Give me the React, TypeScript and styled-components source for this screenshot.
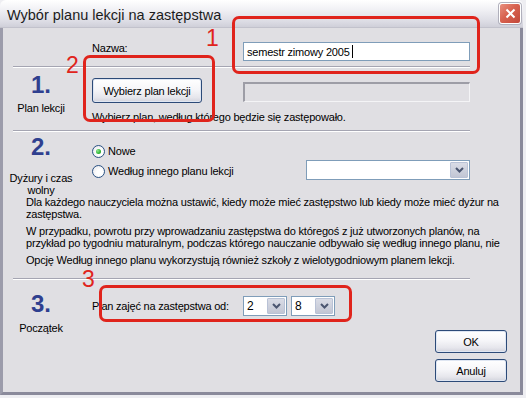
import React from "react";
import styled, { createGlobalStyle } from "styled-components";

const GlobalStyle = createGlobalStyle`
  html, body {
    margin: 0;
    padding: 0;
    background: #eeeef2;
  }
  body {
    font-family: "Liberation Sans", Arial, sans-serif;
    font-size: 11px;
    letter-spacing: -0.2px;
    color: #000;
  }
`;

const Window = styled.div`
  position: relative;
  width: 523px;
  height: 395px;
  display: flex;
  flex-direction: column;
  overflow: hidden;
`;

const TitleBar = styled.div`
  height: 28px;
  flex: none;
  box-sizing: border-box;
  display: flex;
  align-items: center;
  justify-content: space-between;
  padding: 2px 2px 0 7px;
  background: linear-gradient(#ffffff 0%, #f1f1f5 35%, #dcdce4 80%, #cfcfd9 100%);
  border-bottom: 1px solid #c2c2cc;
  border-radius: 6px 6px 0 0;
  font-size: 14.5px;
  letter-spacing: 0;
  color: #1c1c1c;
`;

const CloseButton = styled.div`
  width: 22px;
  height: 21px;
  margin-top: -3px;
  box-sizing: border-box;
  border: 1px solid #fff;
  border-radius: 3px;
  background: linear-gradient(135deg, #e8907f 0%, #d8624f 45%, #c2473a 100%);
  display: flex;
  align-items: center;
  justify-content: center;
  box-shadow: 0 0 0 1px #b0b0bc;
`;

const Body = styled.div`
  flex: 1;
  display: flex;
  flex-direction: column;
  background: #e0dfe3;
  border-left: 3px solid #9c9cab;
  border-right: 3px solid #8a8a9b;
  border-bottom: 3px solid #8a8a9b;
`;

const NameRow = styled.div`
  display: grid;
  grid-template-columns: 151px 227px;
  margin: 14px 0 0 89px;
`;

const FieldLabel = styled.div`
  line-height: 13px;
`;

const TextInput = styled.div`
  height: 19px;
  box-sizing: border-box;
  border: 1px solid #7f9db9;
  background: #fff;
  padding: 0 3px;
  display: flex;
  align-items: center;
  white-space: pre;
`;

const Caret = styled.span`
  display: inline-block;
  width: 1px;
  height: 13px;
  background: #000;
`;

const Separator = styled.div`
  margin: ${(p: { $top: number }) => p.$top}px 0 0 10px;
  width: 457px;
  border-top: 1px solid #a5a5b2;
  border-bottom: 1px solid #ffffff;
`;

const Section = styled.div<{ $withButtons?: boolean }>`
  display: grid;
  grid-template-columns: ${(p) => (p.$withButtons ? "76px 1fr auto" : "76px 1fr")};
  column-gap: 13px;
`;

const StepLabel = styled.div`
  display: flex;
  flex-direction: column;
  align-items: center;
  text-align: center;
`;

const StepNumber = styled.div<{ $top: number }>`
  margin-top: ${(p) => p.$top}px;
  font-size: 24px;
  line-height: 24px;
  font-weight: bold;
  letter-spacing: 0;
  color: #2f3f8f;
`;

const StepCaption = styled.div<{ $top: number }>`
  margin-top: ${(p) => p.$top}px;
  line-height: 12px;
  width: 68px;
`;

const StepContent = styled.div<{ $top: number }>`
  display: flex;
  flex-direction: column;
  padding-top: ${(p) => p.$top}px;
`;

const FieldRow = styled.div<{ $first?: number; $second?: number }>`
  display: grid;
  grid-template-columns: ${(p) => p.$first ?? 151}px ${(p) => p.$second ?? 227}px;
  align-items: start;
`;

const XpButton = styled.div<{ $width: number; $height: number }>`
  width: ${(p) => p.$width}px;
  height: ${(p) => p.$height}px;
  box-sizing: border-box;
  border: 1px solid #2c4a78;
  border-radius: 3px;
  background: linear-gradient(#ffffff 0%, #f6f6f9 45%, #e6e6ec 80%, #d2d3dc 100%);
  box-shadow: inset 0 0 0 1px #dfe6f2;
  display: flex;
  align-items: center;
  justify-content: center;
`;

const DisabledInput = styled.div`
  margin-top: 4px;
  height: 20px;
  box-sizing: border-box;
  border-top: 2px solid #9d9da6;
  border-left: 2px solid #9d9da6;
  border-right: 1px solid #f4f4f6;
  border-bottom: 1px solid #f4f4f6;
  background: #e0dfe3;
`;

const Hint = styled.div`
  margin-top: 8px;
  line-height: 13px;
`;

const RadioRow = styled.label`
  display: flex;
  align-items: center;
  gap: 3px;
  height: 14px;
  margin-top: ${(p: { $top: number }) => p.$top}px;
`;

const RadioCircle = styled.span<{ $checked?: boolean }>`
  width: 13px;
  height: 13px;
  box-sizing: border-box;
  border-radius: 50%;
  border: 1px solid #2a5283;
  background: radial-gradient(circle at 60% 60%, #ffffff 30%, #e3e3e8 100%);
  display: flex;
  align-items: center;
  justify-content: center;
  &::after {
    content: "";
    display: ${(p) => (p.$checked ? "block" : "none")};
    width: 5px;
    height: 5px;
    border-radius: 50%;
    background: radial-gradient(circle at 35% 35%, #8ee68f 0%, #2fb535 60%, #1f8f26 100%);
  }
`;

const Combo = styled.div<{ $width: number }>`
  width: ${(p) => p.$width}px;
  height: 20px;
  box-sizing: border-box;
  border: 1px solid #7f9db9;
  background: #fff;
  display: flex;
  align-items: stretch;
`;

const ComboValue = styled.div`
  flex: 1;
  display: flex;
  align-items: center;
  padding-left: 3px;
  font-size: 12px;
`;

const ComboArrow = styled.div`
  width: 16px;
  margin: 1px;
  border: 1px solid #b9c2d6;
  border-radius: 1px;
  background: linear-gradient(#d9dce6, #c2c6d4);
  display: flex;
  align-items: center;
  justify-content: center;
`;

const Paragraphs = styled.div`
  margin-left: 23px;
  line-height: 12px;
  white-space: nowrap;
`;

const Para = styled.p`
  margin: 0 0 5px 0;
`;

const StartRow = styled.div`
  display: flex;
  align-items: center;
  gap: 4px;
`;

const StartLabel = styled.div`
  width: 147px;
`;

const DialogButtons = styled.div`
  display: flex;
  flex-direction: column;
  gap: 6px;
  padding: 50px 13px 0 0;
`;

const RedFrame = styled.div<{ $x: number; $y: number; $w: number; $h: number }>`
  position: absolute;
  left: ${(p) => p.$x}px;
  top: ${(p) => p.$y}px;
  width: ${(p) => p.$w}px;
  height: ${(p) => p.$h}px;
  box-sizing: border-box;
  border: 3px solid #e0241c;
  border-radius: 7px;
`;

const RedNumber = styled.div<{ $x: number; $y: number }>`
  position: absolute;
  left: ${(p) => p.$x}px;
  top: ${(p) => p.$y}px;
  font-size: 23px;
  line-height: 23px;
  letter-spacing: 0;
  color: #e0241c;
`;

const Chevron = () => (
  <svg width="9" height="6" viewBox="0 0 9 6">
    <path d="M1 1 L4.5 4.5 L8 1" fill="none" stroke="#4a5570" strokeWidth="2" />
  </svg>
);

const App = () => (
  <>
    <GlobalStyle />
    <Window>
      <TitleBar>
        <span>Wybór planu lekcji na zastępstwa</span>
        <CloseButton>
          <svg width="11" height="11" viewBox="0 0 11 11">
            <path d="M1.5 1.5 L9.5 9.5 M9.5 1.5 L1.5 9.5" stroke="#fff" strokeWidth="2" />
          </svg>
        </CloseButton>
      </TitleBar>
      <Body>
        <NameRow>
          <FieldLabel>Nazwa:</FieldLabel>
          <TextInput>
            semestr zimowy 2005 <Caret />
          </TextInput>
        </NameRow>
        <Separator $top={5} />

        <Section>
          <StepLabel>
            <StepNumber $top={5}>1.</StepNumber>
            <StepCaption $top={5}>Plan lekcji</StepCaption>
          </StepLabel>
          <StepContent $top={10}>
            <FieldRow>
              <XpButton $width={110} $height={25}>Wybierz plan lekcji</XpButton>
              <DisabledInput />
            </FieldRow>
            <Hint>Wybierz plan, według którego będzie się zastępowało.</Hint>
          </StepContent>
        </Section>
        <Separator $top={6} />

        <Section>
          <StepLabel>
            <StepNumber $top={3}>2.</StepNumber>
            <StepCaption $top={13}>Dyżury i czas wolny</StepCaption>
          </StepLabel>
          <StepContent $top={12}>
            <RadioRow $top={0}>
              <RadioCircle $checked />
              Nowe
            </RadioRow>
            <FieldRow $first={214} $second={164}>
              <RadioRow $top={6}>
                <RadioCircle />
                Według innego planu lekcji
              </RadioRow>
              <Combo $width={164} style={{ marginTop: 2 }}>
                <ComboValue />
                <ComboArrow>
                  <Chevron />
                </ComboArrow>
              </Combo>
            </FieldRow>
          </StepContent>
        </Section>
        <Paragraphs>
          <Para>
            Dla każdego nauczyciela można ustawić, kiedy może mieć zastępstwo lub kiedy może mieć dyżur na
            <br />
            zastępstwa.
          </Para>
          <Para>
            W przypadku, powrotu przy wprowadzaniu zastępstwa do któregoś z już utworzonych planów, na
            <br />
            przykład po tygodniu maturalnym, podczas którego nauczanie odbywało się według innego planu, nie
          </Para>
          <Para>Opcję Według innego planu wykorzystują również szkoły z wielotygodniowym planem lekcji.</Para>
        </Paragraphs>
        <Separator $top={7} />

        <Section $withButtons>
          <StepLabel>
            <StepNumber $top={12}>3.</StepNumber>
            <StepCaption $top={6}>Początek</StepCaption>
          </StepLabel>
          <StepContent $top={16}>
            <StartRow>
              <StartLabel>Plan zajęć na zastępstwa od:</StartLabel>
              <Combo $width={44}>
                <ComboValue>2</ComboValue>
                <ComboArrow>
                  <Chevron />
                </ComboArrow>
              </Combo>
              <Combo $width={44}>
                <ComboValue>8</ComboValue>
                <ComboArrow>
                  <Chevron />
                </ComboArrow>
              </Combo>
            </StartRow>
          </StepContent>
          <DialogButtons>
            <XpButton $width={72} $height={23}>OK</XpButton>
            <XpButton $width={72} $height={23}>Anuluj</XpButton>
          </DialogButtons>
        </Section>
      </Body>

      <RedFrame $x={232} $y={16} $w={248} $h={58} />
      <RedFrame $x={83} $y={55} $w={132} $h={67} />
      <RedFrame $x={99} $y={285} $w={253} $h={37} />
      <RedNumber $x={206} $y={27}>1</RedNumber>
      <RedNumber $x={66} $y={54}>2</RedNumber>
      <RedNumber $x={82} $y={268}>3</RedNumber>
    </Window>
  </>
);

export default App;
